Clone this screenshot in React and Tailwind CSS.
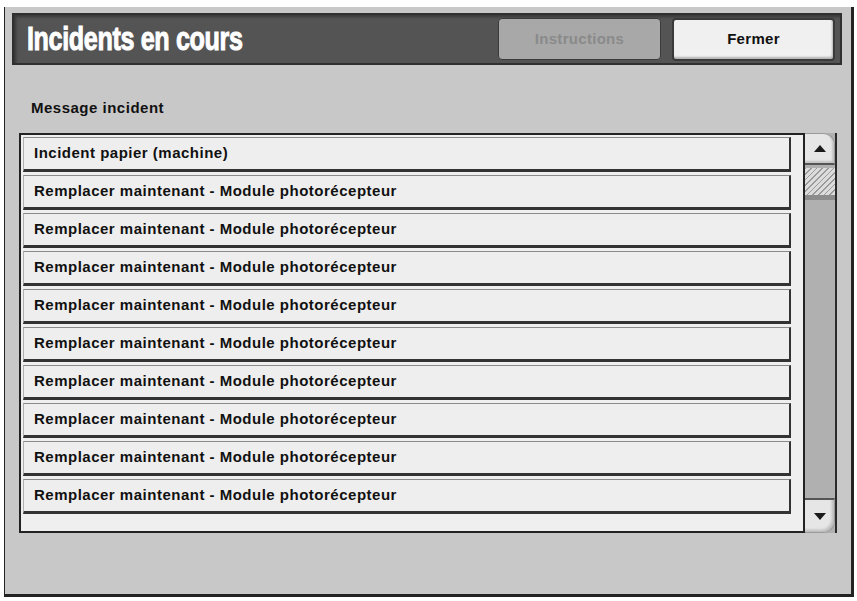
const rows = [
  "Incident papier (machine)",
  "Remplacer maintenant - Module photorécepteur",
  "Remplacer maintenant - Module photorécepteur",
  "Remplacer maintenant - Module photorécepteur",
  "Remplacer maintenant - Module photorécepteur",
  "Remplacer maintenant - Module photorécepteur",
  "Remplacer maintenant - Module photorécepteur",
  "Remplacer maintenant - Module photorécepteur",
  "Remplacer maintenant - Module photorécepteur",
  "Remplacer maintenant - Module photorécepteur",
];

function Arrow({ down }) {
  return (
    <svg width="12" height="7" viewBox="0 0 12 7">
      <path d={down ? "M0 0h12L6 7z" : "M0 7h12L6 0z"} fill="#1a1a1a" />
    </svg>
  );
}

function Scrollbar() {
  return (
    <div className="flex flex-col w-[32px] h-full bg-[#b0b0b0] border-r-2 border-[#2a2a2a]">
      <div className="h-[32px] flex items-center justify-center bg-[#e6e6e6] rounded-tr-[12px] border-t border-r border-[#9a9a9a] border-b-2 border-b-[#555] shadow-[inset_-2px_-2px_2px_rgba(0,0,0,0.15)]">
        <Arrow />
      </div>
      <div className="mt-[3px] h-[32px] border-b-[5px] border-[#8c8c8c] bg-[repeating-linear-gradient(135deg,#9a9a9a_0_1px,#dcdcdc_1px_4px)]" />
      <div className="flex-1" />
      <div className="h-[35px] flex items-center justify-center bg-[#e6e6e6] rounded-br-[12px] border-t-2 border-t-[#555] border-r border-b border-[#9a9a9a] shadow-[inset_-2px_-2px_3px_rgba(0,0,0,0.2)]">
        <Arrow down />
      </div>
    </div>
  );
}

export default function App() {
  return (
    <div className="w-[857px] h-[601px] bg-white pt-[7px] pl-[4px] font-['Liberation_Sans',Arial,sans-serif]">
      <div className="w-[850px] h-[590px] bg-[#c8c8c8] border-l border-r-[3px] border-b-[3px] border-[#222] flex flex-col">
        {/* title bar */}
        <div className="ml-[7px] mt-[6px] w-[830px] h-[52px] flex items-center bg-[#545454] border-2 border-[#303030] shadow-[inset_2px_2px_3px_rgba(0,0,0,0.35)]">
          <div className="pl-[13px] flex-1">
            <h1 className="inline-block origin-left scale-x-[0.74] text-white text-[34px] font-bold tracking-[-0.5px] leading-none [-webkit-text-stroke:1px_white]">
              Incidents en cours
            </h1>
          </div>
          <button className="w-[163px] h-[42px] rounded-[4px] bg-[#a8a8a8] border border-[#3a3a3a] text-[#8a8a8a] text-[15px] font-bold tracking-[0.3px]">
            Instructions
          </button>
          <button className="ml-[11px] mr-[5px] w-[163px] h-[43px] rounded-[4px] bg-[#f0f0f0] border-2 border-[#3a3a3a] shadow-[inset_-1px_-2px_2px_rgba(0,0,0,0.25)] text-[#111] text-[15px] font-bold tracking-[0.3px]">
            Fermer
          </button>
        </div>

        <p className="pl-[26px] mt-[34px] text-[15px] leading-[18px] font-bold tracking-[0.5px] text-[#111]">Message incident</p>

        <div className="ml-[14px] mt-[16px] w-[818px] h-[400px] flex">
          <div className="w-[786px] h-full bg-[#efefef] border-2 border-[#222] pl-[2px] pt-[2px] flex flex-col gap-[3px]">
            {rows.map((r, i) => (
              <div
                key={i}
                className="w-[768px] h-[35px] shrink-0 flex items-center pl-[10px] bg-[#eeeeee] border-t border-l border-t-[#8a8a8a] border-l-[#b0b0b0] border-r-2 border-r-[#333] border-b-[3px] border-b-[#333] text-[15px] font-bold tracking-[0.5px] text-[#111]"
              >
                {r}
              </div>
            ))}
          </div>
          <Scrollbar />
        </div>
      </div>
    </div>
  );
}
